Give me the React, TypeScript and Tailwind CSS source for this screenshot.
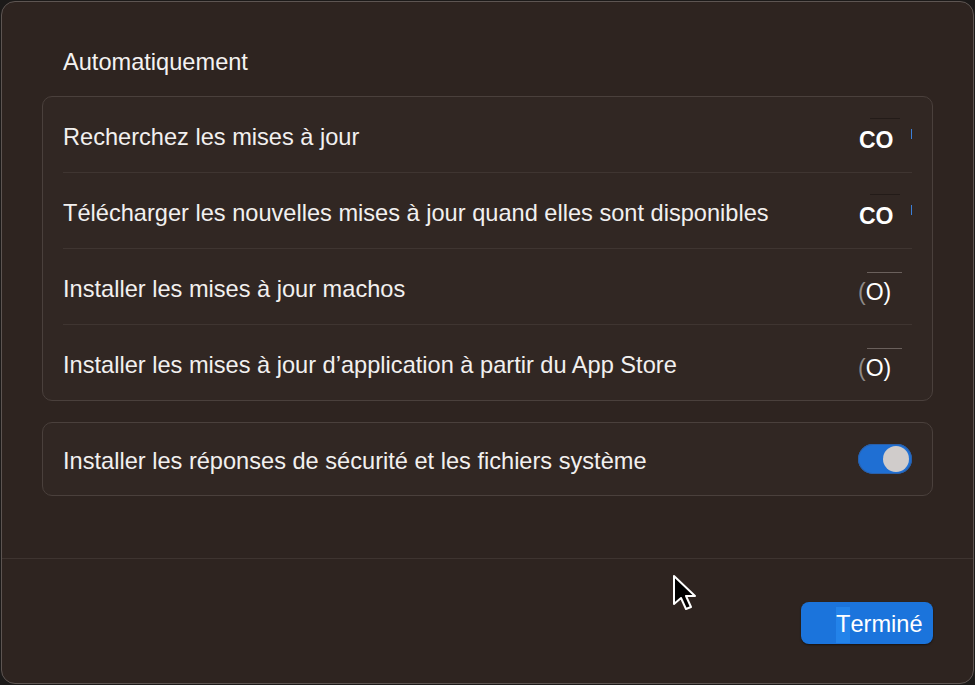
import React from "react";

const font = { fontFamily: '"Liberation Sans", Arial, sans-serif' };

function Glitch({ kind }: { kind: "co" | "o" }) {
  if (kind === "co") {
    return (
      <div className="relative w-[54px] h-[30px]">
        <div className="absolute left-[12px] top-[-5px] w-[30px] h-px bg-[#231b18]" />
        <span className="absolute left-[1px] top-[2px] text-[23px] font-bold leading-[30px] text-white">CO</span>
        <div className="absolute right-[0px] top-[6px] w-px h-[10px] bg-[#3b7fd8]" />
      </div>
    );
  }
  return (
    <div className="relative w-[54px] h-[30px]">
      <div className="absolute left-[9px] top-[-3px] w-[35px] h-px bg-[#6a605c]" />
      <span className="absolute left-0 top-[2px] text-[23px] leading-[30px] text-white">
        <span className="text-[#8f8a88]">(</span>O)
      </span>
    </div>
  );
}

function Toggle() {
  return (
    <div className="w-[54px] h-[30px] rounded-full bg-[#1f6fd3] flex items-center justify-end pr-[3px] shadow-[inset_0_0_0_1px_#2a5fa8]">
      <div className="w-[26px] h-[26px] rounded-full bg-[#d0cccb]" />
    </div>
  );
}

function Row({ label, right, last }: { label: string; right: React.ReactNode; last?: boolean }) {
  return (
    <div className="px-[20px]">
      <div className="h-[75px] flex items-center justify-between pt-[7px]">
        <span className="text-[23.6px] text-[#f2f0ef] leading-none">{label}</span>
        {right}
      </div>
      {!last && <div className="h-px bg-[#3f3531]" />}
    </div>
  );
}

export default function App() {
  return (
    <div className="w-[975px] h-[685px] bg-[#1c1a19] p-px" style={font}>
      <div className="relative h-full rounded-[14px] border border-[#5d5552] bg-[#2e2420] flex flex-col">
        <div className="pt-[46px] pl-[61px] h-[94px]">
          <div className="text-[23.6px] leading-[28px] text-[#f4f2f1]">Automatiquement</div>
        </div>
        <div className="mx-[40px] rounded-[10px] border border-[#4a403c] bg-[#312723]">
          <Row label="Recherchez les mises à jour" right={<Glitch kind="co" />} />
          <Row label="Télécharger les nouvelles mises à jour quand elles sont disponibles" right={<Glitch kind="co" />} />
          <Row label="Installer les mises à jour machos" right={<Glitch kind="o" />} />
          <Row label="Installer les mises à jour d’application à partir du App Store" right={<Glitch kind="o" />} last />
        </div>
        <div className="mx-[40px] mt-[21px] rounded-[10px] border border-[#4a403c] bg-[#312723] px-[20px]">
          <div className="h-[72px] flex items-center justify-between">
            <span className="text-[23.6px] text-[#f2f0ef] leading-none pt-[5px]">Installer les réponses de sécurité et les fichiers système</span>
            <Toggle />
          </div>
        </div>
        <div className="mt-[62px] h-px bg-[#3e3430]" />
        <div className="flex justify-end pr-[40px] pt-[43px]">
          <button className="h-[42px] w-[132px] rounded-[8px] bg-[#1b74dc] flex items-center justify-start pl-[35px] pt-[4px] text-[23.6px] text-white shadow-[0_1px_2px_rgba(0,0,0,0.5)]">
            <span className="bg-[#2383ea]">T</span>erminé
          </button>
        </div>
        <svg className="absolute left-[670px] top-[572px]" width="28" height="42" viewBox="0 0 28 42">
          <path d="M2 2 L2 30 L9 24 L14 35 L19 33 L14 22 L23 22 Z" fill="#000" stroke="#fff" strokeWidth="2" strokeLinejoin="round" />
        </svg>
      </div>
    </div>
  );
}
